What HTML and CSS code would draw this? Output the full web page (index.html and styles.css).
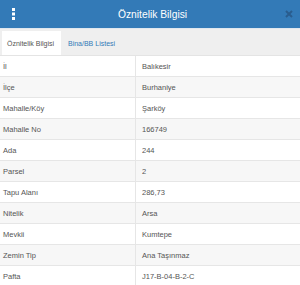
FILE: index.html
```html
<!DOCTYPE html>
<html lang="tr">
<head>
  <meta charset="UTF-8">
  <title>Öznitelik Bilgisi</title>
  <link rel="stylesheet" href="styles.css">
</head>
<body>
  <div class="panel">
    <header class="panel-header">
      <span class="menu-btn">
        <svg width="4" height="12" viewBox="0 0 4 12"><rect x="0" y="0" width="3" height="3" fill="#fff"/><rect x="0" y="4.5" width="3" height="3" fill="#fff"/><rect x="0" y="9" width="3" height="3" fill="#fff"/></svg>
      </span>
      <h1>Öznitelik Bilgisi</h1>
      <span class="close-btn">
        <svg width="8" height="8" viewBox="0 0 8 8"><path d="M1 1 L7 7 M7 1 L1 7" stroke="#2a5d8e" stroke-width="2"/></svg>
      </span>
    </header>
    <nav class="tabs">
      <a class="tab active">Öznitelik Bilgisi</a>
      <a class="tab">Bina/BB Listesi</a>
    </nav>
    <table class="attr-table">
      <tr><td>İl</td><td>Balıkesir</td></tr>
      <tr><td>İlçe</td><td>Burhaniye</td></tr>
      <tr><td>Mahalle/Köy</td><td>Şarköy</td></tr>
      <tr><td>Mahalle No</td><td>166749</td></tr>
      <tr><td>Ada</td><td>244</td></tr>
      <tr><td>Parsel</td><td>2</td></tr>
      <tr><td>Tapu Alanı</td><td>286,73</td></tr>
      <tr><td>Nitelik</td><td>Arsa</td></tr>
      <tr><td>Mevkii</td><td>Kumtepe</td></tr>
      <tr><td>Zemin Tip</td><td>Ana Taşınmaz</td></tr>
      <tr><td>Pafta</td><td>J17-B-04-B-2-C</td></tr>
    </table>
  </div>
</body>
</html>
```

FILE: styles.css
```css
body {
  margin: 0;
  font-family: "Liberation Sans", Arial, sans-serif;
  background-color: #fff;
  overflow: hidden;
}
.panel-header {
  height: 28px;
  background-color: #337ab7;
  display: flex;
  align-items: center;
  justify-content: space-between;
  padding: 0 7px 0 12px;
  border-bottom: 1px solid #dfe7ef;
}
.panel-header h1 {
  margin: 0;
  font-size: 10.3px;
  font-weight: normal;
  color: #fff;
}
.menu-btn, .close-btn {
  display: flex;
  width: 8px;
  justify-content: flex-start;
}
.close-btn {
  justify-content: flex-end;
  padding-right: 0;
}
.tabs {
  display: flex;
  background-color: #efefef;
  padding: 2px 2px 0;
  height: 24px;
  border-bottom: 1px solid #e4e4e4;
}
.tab {
  display: flex;
  align-items: center;
  padding: 0 5px;
  font-size: 7px;
  color: #337ab7;
}
.tab.active {
  background-color: #fff;
  color: #555;
  width: 49px;
  margin-right: 2px;
}
.attr-table {
  width: 100%;
  border-collapse: collapse;
  font-size: 7.5px;
  color: #555;
}
.attr-table td {
  height: 20px;
  padding: 0 4px 0 3px;
  border-bottom: 1px solid #e6e6e6;
}
.attr-table td:first-child {
  width: 128px;
  border-right: 1px solid #e6e6e6;
}
.attr-table td:last-child {
  padding-left: 6px;
}
.attr-table tr:nth-child(even) {
  background-color: #f7f7f7;
}
```
